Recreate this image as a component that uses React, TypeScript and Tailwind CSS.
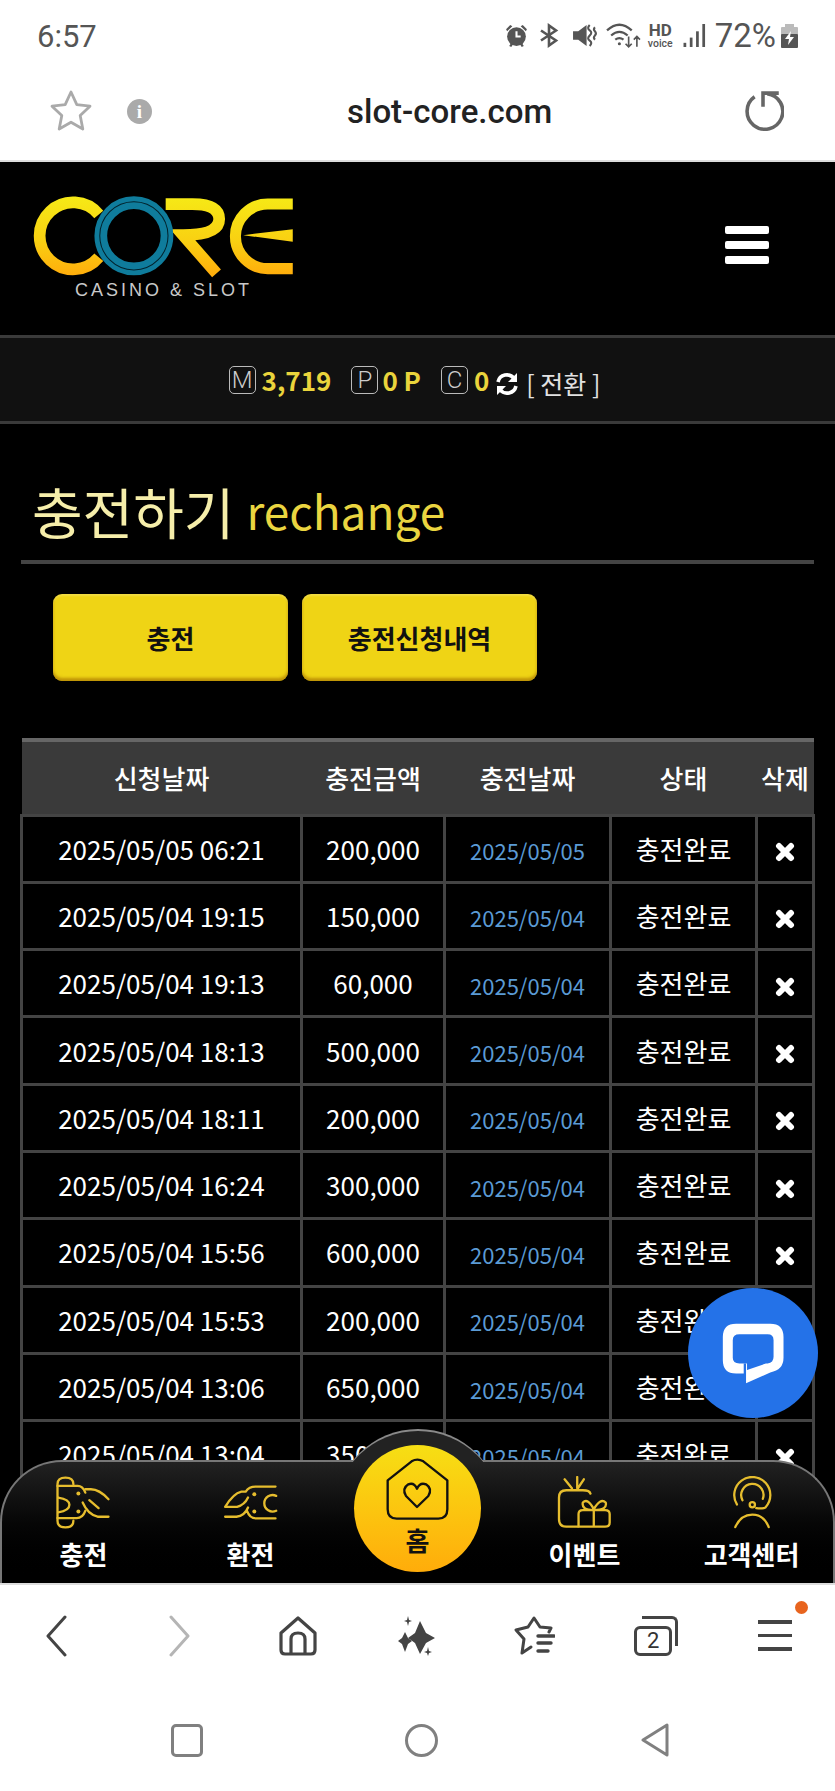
import React from "react";

const rows = [
  ["2025/05/05 06:21", "200,000", "2025/05/05"],
  ["2025/05/04 19:15", "150,000", "2025/05/04"],
  ["2025/05/04 19:13", "60,000", "2025/05/04"],
  ["2025/05/04 18:13", "500,000", "2025/05/04"],
  ["2025/05/04 18:11", "200,000", "2025/05/04"],
  ["2025/05/04 16:24", "300,000", "2025/05/04"],
  ["2025/05/04 15:56", "600,000", "2025/05/04"],
  ["2025/05/04 15:53", "200,000", "2025/05/04"],
  ["2025/05/04 13:06", "650,000", "2025/05/04"],
  ["2025/05/04 13:04", "350,000", "2025/05/04"],
];

const StatusIcons = () => (
  <div className="flex items-center text-[#555]">
    <svg viewBox="0 0 24 24" className="h-[25px] w-[25px] fill-[#555]">
      <circle cx="12" cy="13" r="9" />
      <path d="M2 6l4-4 2 1-5 5zM22 6l-4-4-2 1 5 5zM5 22l2-3 2 1-2 3zM19 22l-2-3-2 1 2 3z" />
      <path d="M12 8v5h4" fill="none" stroke="#fff" strokeWidth="2" />
    </svg>
    <svg viewBox="0 0 22 24" fill="none" stroke="#555" strokeWidth="2.6" className="ml-[9px] h-[25px] w-[22px]">
      <path d="M3 7l15 10-7 5V2l7 5L3 17" />
    </svg>
    <svg viewBox="0 0 24 24" className="ml-[12px] h-[25px] w-[25px]">
      <path d="M1 8h5l8-6v20l-8-6H1z" fill="#555" />
      <path d="M17 2q-3 3 0 5t0 5 0 5 0 5M22 4q-2 2 0 4t0 4 0 4" fill="none" stroke="#555" strokeWidth="2" />
    </svg>
    <svg viewBox="0 0 34 26" fill="none" stroke="#555" strokeWidth="2.2" className="ml-[9px] h-[27px] w-[35px]">
      <path d="M1 8q12-11 24 0M5 13q8-7 16 0M9 17q4-3 8 0" />
      <circle cx="13" cy="21" r="1.5" fill="#555" stroke="none" />
      <path d="M22 14v10M19 21l3 3 3-3M30 24V14M27 17l3-3 3 3" strokeWidth="1.6" />
    </svg>
    <div className="ml-[6px] flex w-[27px] flex-col items-center gap-[1px] font-['Roboto',sans-serif] leading-none">
      <span className="text-[17px] font-bold leading-[15px]">HD</span>
      <span className="text-[10.5px] font-medium leading-[10px]">voice</span>
    </div>
    <svg viewBox="0 0 21 22" className="ml-[9px] h-[23px] w-[23px] fill-[#555]">
      <rect x="0" y="18" width="2.6" height="4" />
      <rect x="6" y="13" width="2.6" height="9" />
      <rect x="12" y="7" width="2.6" height="15" />
      <rect x="18" y="0" width="2.6" height="22" />
    </svg>
    <span className="ml-[9px] font-['Roboto',sans-serif] text-[33px] leading-none">72%</span>
    <svg viewBox="0 0 17 24" className="ml-[5px] h-[24px] w-[17px]">
      <rect x="4" y="0" width="9" height="4" fill="#bbb" />
      <rect x="0" y="3" width="17" height="8" fill="#bbb" rx="1" />
      <rect x="0" y="10" width="17" height="14" fill="#555" rx="1" />
      <path d="M10 7l-6 8h4l-1 6 6-8H9z" fill="#fff" />
    </svg>
  </div>
);

const Logo = () => (
  <div className="flex flex-col">
    <svg viewBox="0 0 870 290" className="h-[97px] w-[292px]">
      <defs>
        <linearGradient id="coreGold" x1="0" y1="37" x2="0" y2="268" gradientUnits="userSpaceOnUse">
          <stop offset="0" stopColor="#f6e916" />
          <stop offset="0.55" stopColor="#f9d112" />
          <stop offset="1" stopColor="#ffae0c" />
        </linearGradient>
      </defs>
      <path d="M240 88A100 100 0 1 0 240 216" fill="none" stroke="url(#coreGold)" strokeWidth="35" />
      <path d="M440 57H520Q600 57 600 102Q600 150 492 150L592 264" fill="none" stroke="url(#coreGold)" strokeWidth="35" />
      <path d="M820 57H745A93 93 0 0 0 745 250H820" fill="none" stroke="url(#coreGold)" strokeWidth="33" />
      <path d="M820 132V170L672 150Z" fill="url(#coreGold)" />
      <circle cx="345" cy="152" r="99" fill="none" stroke="#0f7c9c" strokeWidth="38" />
      <circle cx="345" cy="152" r="102" fill="none" stroke="#02222c" strokeWidth="3" />
    </svg>
    <span className="ml-[57px] mt-[-2px] whitespace-nowrap font-['Liberation_Sans',sans-serif] text-[18px] leading-[20px] tracking-[3px] text-[#c9c9c9]">
      CASINO &amp; SLOT
    </span>
  </div>
);

const BoxLetter = ({ letter }: { letter: string }) => (
  <span className="flex h-[28px] w-[27px] items-center justify-center rounded-[5px] border border-[#bbb] font-['Roboto',sans-serif] text-[24px] font-light leading-none text-[#ccc]">
    {letter}
  </span>
);

const NavLabel = ({ children }: { children: React.ReactNode }) => (
  <span className="mt-[10px] whitespace-nowrap text-[26px] font-bold leading-[30px] text-white">{children}</span>
);

const iconStroke = { fill: "none", stroke: "#e6bd2e", strokeWidth: 7, strokeLinecap: "round", strokeLinejoin: "round" } as const;

const BottomNav = () => (
  <div className="absolute inset-x-0 bottom-0 h-[123px]">
    <div className="absolute inset-0 rounded-t-[62px] border-x-2 border-t-2 border-[#777] bg-gradient-to-b from-[#222] to-black" />
    {/* bump of the home ring over the bar's top edge */}
    <div className="absolute left-[335px] top-[-31px] h-[33px] w-[166px] overflow-hidden">
      <div className="h-[166px] w-[166px] rounded-full border-t-2 border-[#8a8a8a] bg-[#222]" />
    </div>
    <div className="relative flex h-full">
      <div className="flex w-[167px] flex-col items-center pt-[16px]">
        <svg viewBox="170 175 165 160" className="h-[53px] w-[55px]">
          <path {...iconStroke} d="M222 200Q222 180 198 180Q174 180 174 200V310Q174 330 198 330Q222 330 222 310" />
          <path {...iconStroke} d="M174 205H235Q250 205 258 225M174 302H232Q250 302 258 280M176 240Q210 245 210 262Q210 280 176 285" />
          <path {...iconStroke} d="M258 215H275Q300 215 328 245M250 255Q265 290 295 298H328M270 248L298 272" />
          <circle cx="237" cy="228" r="6" fill="#e6bd2e" />
          <circle cx="237" cy="282" r="6" fill="#e6bd2e" />
        </svg>
        <NavLabel>충전</NavLabel>
      </div>
      <div className="flex w-[167px] flex-col items-center pt-[16px]">
        <svg viewBox="670 175 165 160" className="h-[53px] w-[55px]">
          <path {...iconStroke} d="M828 207H768Q748 207 738 222H725Q700 228 676 268H712Q735 262 745 240" />
          <path {...iconStroke} d="M676 298H710Q735 295 745 270M828 303H770Q750 303 742 280M830 235A25 25 0 1 0 830 280" />
          <circle cx="764" cy="230" r="6" fill="#e6bd2e" />
          <circle cx="764" cy="282" r="6" fill="#e6bd2e" />
        </svg>
        <NavLabel>환전</NavLabel>
      </div>
      <div className="w-[167px]">
        <div className="absolute left-[354px] top-[-15px] flex h-[127px] w-[127px] flex-col items-center rounded-full bg-gradient-to-b from-[#f6df14] to-[#ffac0a] pt-[12px]">
          <svg viewBox="135 105 195 195" className="h-[65px] w-[65px]">
            <path d="M143 175L215 118Q232 108 250 118L322 175V262Q322 290 295 290H170Q143 290 143 262Z" fill="none" stroke="#111" strokeWidth="7" strokeLinejoin="round" />
            <path d="M231 255L198 222Q185 200 205 187Q222 180 231 200Q240 180 258 187Q278 200 265 222Z" fill="none" stroke="#111" strokeWidth="7" strokeLinejoin="round" />
          </svg>
          <span className="mt-[3px] text-[26px] font-bold leading-[30px] text-[#111]">홈</span>
        </div>
      </div>
      <div className="flex w-[167px] flex-col items-center pt-[16px]">
        <svg viewBox="425 175 170 160" className="h-[53px] w-[57px]">
          <path {...iconStroke} d="M490 328H455Q433 328 433 305V240Q433 218 455 218H505Q525 218 528 228M450 185L472 212M488 178V212M508 185L490 212" />
          <path {...iconStroke} d="M492 328V290Q492 278 505 278H572Q586 278 586 290V315Q586 328 572 328ZM538 278V328M538 278Q500 278 505 255Q520 240 538 275M538 278Q580 278 574 255Q558 240 538 275" />
        </svg>
        <NavLabel>이벤트</NavLabel>
      </div>
      <div className="flex w-[167px] flex-col items-center pt-[16px]">
        <svg viewBox="945 175 125 160" className="h-[53px] w-[41px]">
          <path {...iconStroke} d="M963 261A55 55 0 1 1 1050 270Q1040 275 1022 272M980 248A34 34 0 1 1 1042 244" />
          <circle cx="1010" cy="262" r="8" {...iconStroke} />
          <path {...iconStroke} d="M958 330Q975 292 1010 292Q1045 292 1060 330" />
        </svg>
        <NavLabel>고객센터</NavLabel>
      </div>
    </div>
  </div>
);

const ChatButton = () => (
  <div className="absolute left-[688px] top-[1126px] flex h-[130px] w-[130px] items-center justify-center rounded-full bg-[#2472e8]">
    <svg viewBox="150 160 195 190" className="h-[63px] w-[65px]">
      <path
        fillRule="evenodd"
        fill="#fff"
        d="M195 165H298Q338 165 338 205V268Q338 305 298 312L225 345V315H195Q155 315 155 275V205Q155 165 195 165ZM205 197Q185 197 185 215V268Q185 285 205 285H228V305L285 285H290Q308 283 308 265V215Q308 197 290 197Z"
      />
      <rect x="218" y="285" width="7" height="32" fill="#2472e8" />
    </svg>
  </div>
);

export default function App() {
  return (
    <div className="flex h-[1791px] w-[835px] flex-col overflow-hidden bg-white font-['Noto_Sans_CJK_KR','Noto_Sans',sans-serif]">
      {/* phone status + url bar */}
      <div className="flex h-[72px] items-end justify-between px-[37px] pb-[20px]">
        <span className="font-['Roboto',sans-serif] text-[31px] leading-none text-[#555]">6:57</span>
        <StatusIcons />
      </div>
      <div className="flex h-[90px] items-center border-b-2 border-[#ddd] pb-[10px] pl-[47px] pr-[51px]">
        <svg viewBox="0 0 24 24" className="h-[48px] w-[48px]" fill="none" stroke="#aaa" strokeWidth="1.4" strokeLinejoin="round">
          <path d="M12 2.5l2.9 6.3 6.6.8-4.9 4.6 1.3 6.8-5.9-3.4-5.9 3.4 1.3-6.8-4.9-4.6 6.6-.8z" />
        </svg>
        <div className="ml-[32px] flex h-[25px] w-[25px] items-center justify-center rounded-full bg-[#aaa] font-['Liberation_Serif',serif] text-[19px] font-bold leading-none text-white">
          i
        </div>
        <span className="ml-[195px] font-['Roboto',sans-serif] text-[33px] font-medium leading-none text-[#222]">slot-core.com</span>
        <svg viewBox="0 0 40 40" className="ml-auto h-[42px] w-[42px]" fill="none" stroke="#666" strokeWidth="3.4">
          <path d="M12 6.5A17 17 0 1 0 24 3.5" />
          <path d="M20 16V3H35" strokeLinejoin="miter" />
        </svg>
      </div>

      {/* site */}
      <div className="relative min-h-0 flex-1 overflow-hidden bg-black">
        <div className="flex h-[173px] items-start justify-between pl-[18px] pr-[66px] pt-[23px]">
          <Logo />
          <div className="mt-[41px] flex w-[44px] flex-col gap-[7px]">
            <div className="h-[8px] rounded-[2px] bg-white" />
            <div className="h-[8px] rounded-[2px] bg-white" />
            <div className="h-[8px] rounded-[2px] bg-white" />
          </div>
        </div>

        <div className="flex h-[89px] items-center justify-center border-y-[3px] border-[#3a3a3a] bg-[#111] pr-[6px] text-[26px] font-bold leading-none text-[#ead43c]">
          <BoxLetter letter="M" />
          <span className="ml-[6px]">3,719</span>
          <span className="ml-[20px]"><BoxLetter letter="P" /></span>
          <span className="ml-[4px]">0 P</span>
          <span className="ml-[20px]"><BoxLetter letter="C" /></span>
          <span className="ml-[6px]">0</span>
          <svg viewBox="0 0 24 24" className="ml-[6px] mt-[8px] h-[24px] w-[24px]" fill="none" stroke="#fff" strokeWidth="3.6">
            <path d="M3 10A9 9 0 0 1 19 6.5M21 14A9 9 0 0 1 5 17.5" />
            <path d="M22 1V10H13ZM2 23V14H11Z" fill="#fff" stroke="none" />
          </svg>
          <span className="ml-[7px] mt-[7px] text-[25px] font-normal text-[#e2e2e2]">[ 전환 ]</span>
        </div>

        <div className="mx-[21px] mt-[50px] flex items-end border-b-4 border-[#444] pb-[14px] pl-[11px]">
          <span className="text-[55px] leading-[72px] text-[#f6eeaa]">충전하기</span>
          <span className="ml-[12px] text-[46px] leading-[72px] text-[#ead540]">rechange</span>
        </div>

        <div className="ml-[53px] mt-[30px] flex gap-[14px]">
          <button className="h-[87px] w-[235px] rounded-[9px] bg-[#efd415] text-[26px] font-bold text-[#111] shadow-[inset_0_-3px_3px_rgba(170,120,0,0.7),inset_0_2px_2px_rgba(255,255,255,0.2)]">
            충전
          </button>
          <button className="h-[87px] w-[235px] rounded-[9px] bg-[#efd415] text-[26px] font-bold text-[#111] shadow-[inset_0_-3px_3px_rgba(170,120,0,0.7),inset_0_2px_2px_rgba(255,255,255,0.2)]">
            충전신청내역
          </button>
        </div>

        <table className="ml-[20px] mt-[57px] w-[792px] table-fixed border-collapse text-center text-[26px] text-white">
          <colgroup>
            <col className="w-[280px]" />
            <col className="w-[143px]" />
            <col className="w-[166px]" />
            <col className="w-[146px]" />
            <col className="w-[57px]" />
          </colgroup>
          <thead>
            <tr>
              {["신청날짜", "충전금액", "충전날짜", "상태", "삭제"].map((h) => (
                <th key={h} className="h-[75px] border-t-4 border-[#666] bg-[#3a3a3a] p-0 font-medium leading-none">
                  {h}
                </th>
              ))}
            </tr>
          </thead>
          <tbody>
            {rows.map((r) => (
              <tr key={r[0]}>
                <td className="h-[67.3px] border-[3px] border-[#444] p-0 leading-none">{r[0]}</td>
                <td className="border-[3px] border-[#444] p-0 leading-none">{r[1]}</td>
                <td className="border-[3px] border-[#444] p-0 pt-[3px] text-[22px] leading-none text-[#5b9bd5]">{r[2]}</td>
                <td className="border-[3px] border-[#444] p-0 leading-none">충전완료</td>
                <td className="border-[3px] border-[#444] p-0">
                  <svg viewBox="0 0 20 20" className="mx-auto mt-[7px] h-[20px] w-[20px]" stroke="#fff" strokeWidth="6" strokeLinecap="round">
                    <path d="M4 4L16 16M16 4L4 16" />
                  </svg>
                </td>
              </tr>
            ))}
          </tbody>
        </table>

        <ChatButton />
        <BottomNav />
      </div>

      {/* browser toolbar */}
      <div className="h-[208px] border-t-2 border-[#ddd]">
        <div className="grid h-[92px] grid-cols-7 items-center pt-[9px]">
          <svg viewBox="0 0 22 42" className="ml-[45px] h-[42px] w-[22px]" fill="none" stroke="#444" strokeWidth="3" strokeLinecap="round" strokeLinejoin="round">
            <path d="M20 2L3 21l17 19" />
          </svg>
          <svg viewBox="0 0 22 42" className="ml-[50px] h-[42px] w-[22px]" fill="none" stroke="#b5b5b5" strokeWidth="3" strokeLinecap="round" strokeLinejoin="round">
            <path d="M2 2l17 19L2 40" />
          </svg>
          <svg viewBox="0 0 38 40" className="mx-auto h-[40px] w-[38px]" fill="none" stroke="#444" strokeWidth="3.2" strokeLinejoin="round">
            <path d="M19 2L2 17V34Q2 38 6 38H32Q36 38 36 34V17ZM12 38V23Q12 17 19 17Q26 17 26 23V38" />
          </svg>
          <svg viewBox="0 0 38 40" className="mx-auto h-[40px] w-[38px] fill-[#444]">
            <path d="M22 5L28 17L37 22L28 27L22 38L17 27L10 22L17 17Z" />
            <path d="M7 16L10 22L14 25L10 28L7 36L4 28L0 25L4 22Z" />
            <path d="M10 0L11 4L14 5L11 6L10 10L9 6L6 5L9 4ZM30 31L31 35L34 36L31 37L30 40L29 37L26 36L29 35Z" />
          </svg>
          <svg viewBox="0 0 42 40" className="ml-[36px] h-[40px] w-[42px]" fill="none" stroke="#444" strokeWidth="3" strokeLinecap="round" strokeLinejoin="round">
            <path d="M36 16L38 12L27 11L21 2L15 11L3 14L11 23L9 37L18 31" />
            <path d="M25 20H41M25 27H38M25 35H35" strokeWidth="3.4" />
          </svg>
          <div className="relative mx-auto h-[40px] w-[44px]">
            <div className="absolute right-0 top-0 h-[30px] w-[36px] rounded-tr-[6px] border-r-[3px] border-t-[3px] border-[#444]" />
            <div className="absolute bottom-0 left-0 flex h-[30px] w-[38px] items-center justify-center rounded-[6px] border-[3px] border-[#444] bg-white font-['Roboto',sans-serif] text-[22px] leading-none text-[#333]">
              2
            </div>
          </div>
          <div className="relative mx-auto flex w-[34px] flex-col gap-[10px]">
            <div className="h-[3.5px] bg-[#444]" />
            <div className="h-[3.5px] bg-[#444]" />
            <div className="h-[3.5px] bg-[#444]" />
            <div className="absolute right-[-16px] top-[-19px] h-[13px] w-[13px] rounded-full bg-[#e8641e]" />
          </div>
        </div>
        <div className="mt-[46px] grid grid-cols-3 items-center pl-[70px] pr-[63px]">
          <div className="mx-auto h-[33px] w-[32px] rounded-[5px] border-[3px] border-[#808080]" />
          <div className="mx-auto h-[33px] w-[33px] rounded-full border-[3px] border-[#808080]" />
          <svg viewBox="0 0 30 34" className="mx-auto h-[34px] w-[30px]" fill="none" stroke="#808080" strokeWidth="3" strokeLinejoin="round">
            <path d="M27 2V32L3 17Z" />
          </svg>
        </div>
      </div>
    </div>
  );
}
